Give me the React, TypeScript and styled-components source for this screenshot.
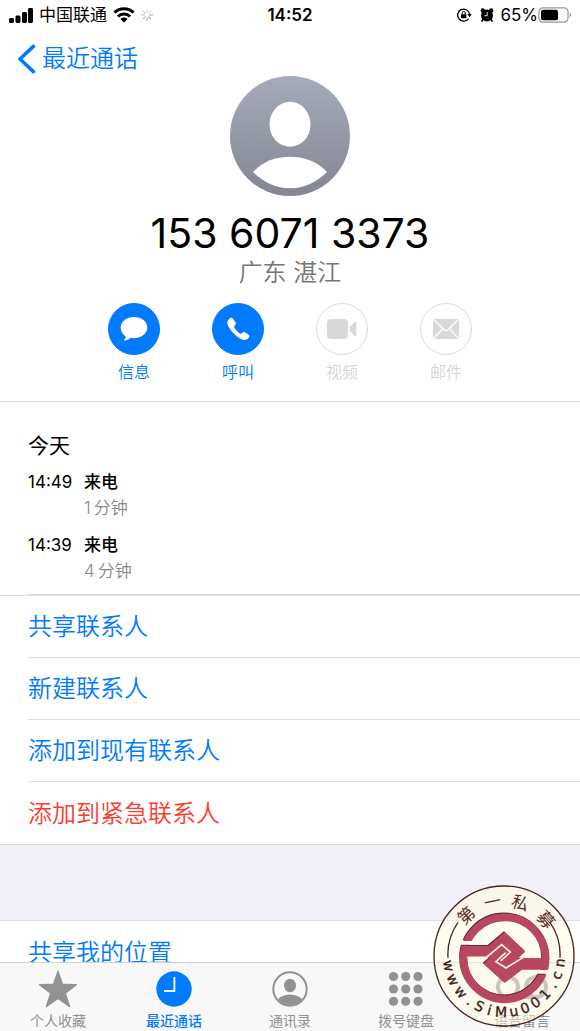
import React from "react";
import styled, { createGlobalStyle } from "styled-components";

const BLUE = "#007aff";
const GRAY = "#929292";
const LINE = "#dcdcdf";

const GlobalStyle = createGlobalStyle`
  *, *::before, *::after { box-sizing: border-box; }
  body {
    margin: 0;
    background: #fff;
    color: #000;
    font-family: Inter, "Noto Sans CJK SC", sans-serif;
  }
  button { font: inherit; color: inherit; background: none; border: 0; padding: 0; cursor: pointer; }
  h1, h2, p, ul { margin: 0; padding: 0; font-weight: 400; }
  ul { list-style: none; }
  svg { display: block; }
`;

const Screen = styled.div`
  position: relative;
  display: flex;
  flex-direction: column;
  height: 100vh;
  overflow: hidden;
`;

const StatusBar = styled.header`
  display: grid;
  grid-template-columns: 1fr auto 1fr;
  align-items: center;
  flex: none;
  height: 30px;
  padding: 0 8px;
  font-size: 17px;
  line-height: 30px;
`;

const StatusGroup = styled.div<{ $end?: boolean }>`
  display: flex;
  align-items: center;
  justify-content: ${(p) => (p.$end ? "flex-end" : "flex-start")};
  gap: ${(p) => (p.$end ? 0 : 6)}px;
`;

const StatusIcons = styled.span`
  display: flex;
  gap: 8px;
  margin-right: 6px;
`;

const Clock = styled.time`
  font-weight: 600;
`;

const NavBar = styled.nav`
  flex: none;
  height: 46px;
  padding: 8px 16px;
`;

const BackLink = styled.a`
  display: inline-flex;
  align-items: center;
  gap: 6px;
  height: 42px;
  color: ${BLUE};
  font-size: 24px;
  font-weight: 350;
  line-height: 44px;
  text-decoration: none;
`;

const Content = styled.main`
  flex: 1;
  min-height: 0;
  overflow: hidden;
`;

const Profile = styled.section`
  display: flex;
  flex-direction: column;
  align-items: center;
  padding-bottom: 17px;
  border-bottom: 1px solid ${LINE};
`;

const PhoneNumber = styled.h1`
  margin-top: 12px;
  font-size: 41px;
  line-height: 50px;
`;

const Region = styled.p`
  color: #757578;
  font-size: 24px;
  font-weight: 350;
  line-height: 30px;
`;

const Actions = styled.div`
  display: flex;
  gap: 52px;
  margin-top: 15px;
`;

const Action = styled.button`
  display: flex;
  flex-direction: column;
  align-items: center;
  gap: 5px;
  width: 52px;
  color: ${BLUE};
  font-size: 16px;
  font-weight: 350;
  line-height: 24px;
  &:disabled { color: #d4d4d6; cursor: default; }
`;

const ActionDisc = styled.span<{ $off?: boolean }>`
  display: grid;
  place-items: center;
  width: 52px;
  height: 52px;
  border: 1px solid ${(p) => (p.$off ? "#dcdcde" : BLUE)};
  border-radius: 50%;
  background: ${(p) => (p.$off ? "#fff" : BLUE)};
`;

const CallLog = styled.section`
  padding: 28px 0 0 28px;
`;

const Day = styled.h2`
  font-size: 21px;
  line-height: 32px;
`;

const Calls = styled.ul`
  display: grid;
  gap: 11px;
  margin-top: 7px;
  padding-bottom: 10px;
  border-bottom: 1px solid ${LINE};
`;

const Call = styled.li`
  display: grid;
  grid-template-columns: 56px 1fr;
  font-size: 17px;
  line-height: 26px;
`;

const CallKind = styled.span`
  font-weight: 500;
`;

const CallLength = styled.span`
  display: flex;
  gap: 3px;
  grid-column: 2;
  color: #88888c;
  font-weight: 350;
`;

const Rows = styled.ul`
  border-top: 1px solid ${LINE};
  border-bottom: 1px solid ${LINE};
`;

const Row = styled.li`
  padding-left: 28px;
`;

const RowButton = styled.button<{ $danger?: boolean }>`
  display: block;
  width: 100%;
  height: 62px;
  color: ${(p) => (p.$danger ? "#ff3b30" : BLUE)};
  font-size: 24px;
  font-weight: 350;
  line-height: 61px;
  text-align: left;
  ${Row}:not(:last-child) & { border-bottom: 1px solid ${LINE}; }
`;

const Spacer = styled.div`
  height: 75px;
  background: #f2f1f7;
`;

const TabBar = styled.nav`
  display: grid;
  grid-template-columns: repeat(5, 1fr);
  flex: none;
  height: 69px;
  border-top: 1px solid #d2d2d4;
  background: #f8f8f9;
`;

const Tab = styled.a<{ $active?: boolean }>`
  display: flex;
  flex-direction: column;
  align-items: center;
  padding-top: 7px;
  gap: 3px;
  color: ${(p) => (p.$active ? BLUE : GRAY)};
  font-size: 14px;
  font-weight: ${(p) => (p.$active ? 500 : 400)};
  line-height: 20px;
  text-decoration: none;
`;

const Seal = styled.svg`
  position: absolute;
  right: 5px;
  bottom: 4px;
  pointer-events: none;
`;

const Signal = () => (
  <svg width="25" height="16" viewBox="0 0 25 16" aria-label="信号">
    <rect x="1" y="11" width="5" height="5" rx="1.4" />
    <rect x="7.5" y="8.5" width="5" height="7.5" rx="1.4" />
    <rect x="14" y="5" width="5" height="11" rx="1.4" />
    <rect x="20" y="1" width="5" height="15" rx="1.4" />
  </svg>
);

const Wifi = () => (
  <svg width="22" height="16" viewBox="0 0 22 16" aria-label="Wi-Fi">
    <g fill="none" stroke="#000" strokeWidth="3">
      <path d="M1.4 5.6a13.7 13.7 0 0 1 19.2 0" />
      <path d="M4.9 9.5a8.7 8.7 0 0 1 12.2 0" />
    </g>
    <path d="M11 15.6 7.4 12a5.2 5.2 0 0 1 7.2 0z" />
  </svg>
);

const Spinner = () => (
  <svg width="12" height="12" viewBox="0 0 12 12">
    {[0, 45, 90, 135, 180, 225, 270, 315].map((a, i) => (
      <path
        key={a}
        d="M6 .5v3"
        stroke="#999"
        strokeWidth="1.1"
        strokeLinecap="round"
        opacity={0.95 - ((i + 6) % 8) * 0.09}
        transform={`rotate(${a} 6 6)`}
      />
    ))}
  </svg>
);

const RotationLock = () => (
  <svg width="15" height="14" viewBox="0 0 15 14">
    <path d="M11.6 10.6A6 6 0 1 1 12.6 6" fill="none" stroke="#000" strokeWidth="1.3" />
    <path d="M10.4 6h4.4l-2.2 3.2z" />
    <rect x="4" y="6.3" width="5.4" height="4" rx=".6" />
    <path d="M5.2 6.5V5a1.5 1.5 0 0 1 3 0v1.5" fill="none" stroke="#000" strokeWidth="1" />
  </svg>
);

const Alarm = () => (
  <svg width="14" height="14" viewBox="0 0 14 14">
    <circle cx="7" cy="7.4" r="6" />
    <circle cx="2.8" cy="2.5" r="2.2" />
    <circle cx="11.2" cy="2.5" r="2.2" />
    <path d="m3.2 11-1.6 2.6M10.8 11l1.6 2.6" stroke="#000" strokeWidth="1.7" />
    <path d="M7.2 4.2v3.5H4.5" fill="none" stroke="#fff" strokeWidth=".9" />
  </svg>
);

const Battery = () => (
  <svg width="34" height="16" viewBox="0 0 34 16">
    <rect x="1" y=".8" width="29" height="14.4" rx="4" fill="#fff" stroke="#999" strokeWidth="1.2" />
    <rect x="3" y="2.8" width="17" height="10.4" rx="2" />
    <path d="M31.6 5.6c2 .8 2 4 0 4.8z" fill="#999" />
  </svg>
);

const Chevron = () => (
  <svg width="20" height="30" viewBox="0 0 20 30">
    <path d="M17.4 2.4 4 15l13.4 12.6" fill="none" stroke={BLUE} strokeWidth="3.6" strokeLinecap="round" strokeLinejoin="round" />
  </svg>
);

const Avatar = () => (
  <svg width="120" height="120" viewBox="0 0 120 120" aria-label="头像">
    <defs>
      <linearGradient id="avatar" x2="0" y2="1">
        <stop stopColor="#a5abba" />
        <stop offset="1" stopColor="#848792" />
      </linearGradient>
    </defs>
    <circle cx="60" cy="60" r="60" fill="url(#avatar)" />
    <ellipse cx="60" cy="48.300" rx="20.500" ry="22.500" fill="#fff" />
    <path d="M23 96c9-10 22-15.300 37-15.300S88 86 97 96c-10 10-23 16.300-37 16.300S33 106 23 96z" fill="#fff" />
  </svg>
);

const Bubble = () => (
  <svg width="28" height="26" viewBox="0 0 28 26" fill="#fff">
    <path d="M14 1c7.500 0 13.300 4.600 13.300 10.600S21.500 22.200 14 22.200c-1.300 0-2.500-.1-3.600-.4-1.600 1.700-3.600 2.700-6 2.900-.6 0-.7-.5-.4-.9 1-.9 1.600-2 1.600-3.400C2.600 18.500.7 15.400.7 11.600.7 5.600 6.500 1 14 1z" />
  </svg>
);

const Handset = () => (
  <svg width="24" height="24" viewBox="0 0 24 24" fill="#fff">
    <path d="M2.800 2.300C4.200.9 5.600.3 6.700 1.400c1 1.100 2.500 3.200 3 4.200.6 1.200.1 2.100-.8 2.900-.9.700-1 1.300-.5 2.300 1 1.900 3.700 4.700 5.500 5.700 1 .6 1.600.4 2.300-.4.900-1.100 1.800-1.400 3-.7 1.200.6 2.800 1.700 3.700 2.600 1 1.100.5 2.300-.7 3.500-1.900 1.900-4.800 1.800-8.200-.1C10 19.200 4.900 14 2.600 9.800.8 6.500 1 4.100 2.800 2.300z" />
  </svg>
);

const Camera = () => (
  <svg width="30" height="20" viewBox="0 0 30 20" fill="#d9d9db">
    <rect x="0" y="0" width="21" height="20" rx="4" />
    <path d="M22.500 8.500 27.800 3c.6-.6 1.500-.3 1.500.6v12.800c0 .9-.9 1.200-1.500.6l-5.300-5.500z" />
  </svg>
);

const Envelope = () => (
  <svg width="26" height="20" viewBox="0 0 26 20">
    <rect width="26" height="20" rx="1" fill="#d9d9db" />
    <path d="m.5.500 10.700 10.300q1.800 1.600 3.600 0L25.500.5M.5 19.500l8.700-9.200M25.500 19.500l-8.700-9.200" fill="none" stroke="#fff" strokeWidth="1.400" />
  </svg>
);

const Star = () => (
  <svg width="40" height="38" viewBox="0 0 40 38" fill={GRAY}>
    <path d="M20 .5q.5 0 .8.900L25 13.700l13.500.3q1.300.3.300 1.300L28.100 23.500l4.100 12.700q.2 1.500-1.100.8L20 29.300 8.900 37q-1.300.7-1.100-.8l4.100-12.700L1.200 15.300q-1-1 .3-1.300l13.500-.3L19.200 1.400q.3-.9.800-.9z" />
  </svg>
);

const Recent = () => (
  <svg width="40" height="38" viewBox="0 0 40 38">
    <circle cx="20" cy="19" r="17.700" fill={BLUE} />
    <path d="M20.400 7v14H10" fill="none" stroke="#fff" strokeWidth="1.800" />
  </svg>
);

const Person = () => (
  <svg width="40" height="38" viewBox="0 0 40 38">
    <clipPath id="person"><circle cx="20" cy="19" r="16" /></clipPath>
    <circle cx="20" cy="19" r="16.700" fill="none" stroke={GRAY} strokeWidth="2" />
    <ellipse cx="20" cy="15.500" rx="6" ry="6.700" fill={GRAY} />
    <ellipse cx="20" cy="34" rx="14" ry="9.500" fill={GRAY} clipPath="url(#person)" />
  </svg>
);

const Keypad = () => (
  <svg width="40" height="38" viewBox="0 0 40 38" fill={GRAY}>
    {[6.5, 19, 31.300].map((y) => [7.5, 19.700, 32].map((x) => <circle key={`${x}-${y}`} cx={x} cy={y} r="4.600" />))}
  </svg>
);

const Voicemail = () => (
  <svg width="56" height="38" viewBox="0 0 56 38" fill="none" stroke={GRAY} strokeWidth="4">
    <circle cx="14" cy="17" r="10" />
    <circle cx="42" cy="17" r="10" />
    <path d="M14 27h28" />
  </svg>
);

const SEAL_TOP: [string, number][] = [["第", -43], ["一", -12], ["私", 17], ["募", 49]];
const SEAL_URL: [string, number][] = [
  ["w", 80], ["w", 65], ["w", 50], [".", 37], ["S", 26], ["i", 15], ["M", 3],
  ["u", -10], ["0", -22], ["0", -34], ["1", -47], [".", -59], ["c", -70], ["n", -83],
];

const SealMark = () => (
  <Seal width="142" height="142" viewBox="0 0 426 426">
    <circle cx="213" cy="213" r="210" fill="#fffce0" fillOpacity=".5" stroke="#4a2420" strokeWidth="4" />
    <path d="M75 112A168 168 0 0 0 45 218M351 112a168 168 0 0 1 30 106" fill="none" stroke="#4a2420" strokeWidth="4" />
    <g fill="#5a2a22" fontSize="51" textAnchor="middle" fontFamily='"Noto Sans CJK SC", sans-serif'>
      {SEAL_TOP.map(([ch, a]) => (
        <text key={ch} x="213" y="65" transform={`rotate(${a} 213 213)`}>{ch}</text>
      ))}
    </g>
    <g fill="#3a1a18" stroke="#3a1a18" strokeWidth="1" fontSize="42" textAnchor="middle" fontFamily='"DejaVu Sans", sans-serif'>
      {SEAL_URL.map(([ch, a], i) => (
        <text key={i} x="213" y="396" transform={`rotate(${a} 213 213)`}>{ch}</text>
      ))}
    </g>
    <defs>
      <mask id="gaps" maskUnits="userSpaceOnUse" x="0" y="0" width="292" height="292">
        <rect width="292" height="292" fill="#fff" />
        <path d="M0 95H80V109H0zM212 182H292V196H212z" fill="#000" />
      </mask>
      <g id="emblem">
        <circle cx="146" cy="147" r="123" fill="none" strokeWidth="23" />
        <path d="M22 110H97L146 69 208 127 184 148H270V181H198L146 221 82 163 103 145H22z" stroke="none" />
      </g>
    </defs>
    <g transform="translate(67 70)">
      <g mask="url(#gaps)">
        <use href="#emblem" fill="#6d2234" stroke="#6d2234" />
      </g>
      <g mask="url(#gaps)" transform="translate(2 3)">
        <use href="#emblem" fill="#b8475f" stroke="#b8475f" />
      </g>
      <path d="M36 147H93L139 109 165 131 136 158M257 147H204L152 179 122 160 151 133" fill="none" stroke="#fff6d8" strokeWidth="5" />
    </g>
  </Seal>
);

const ACTIONS = [
  { label: "信息", icon: <Bubble /> },
  { label: "呼叫", icon: <Handset /> },
  { label: "视频", icon: <Camera />, off: true },
  { label: "邮件", icon: <Envelope />, off: true },
];

const CALLS = [
  { time: "14:49", kind: "来电", minutes: 1 },
  { time: "14:39", kind: "来电", minutes: 4 },
];

const TABS = [
  { label: "个人收藏", icon: <Star /> },
  { label: "最近通话", icon: <Recent />, active: true },
  { label: "通讯录", icon: <Person /> },
  { label: "拨号键盘", icon: <Keypad /> },
  { label: "语音留言", icon: <Voicemail /> },
];

export default function App() {
  return (
    <Screen>
      <GlobalStyle />
      <StatusBar>
        <StatusGroup>
          <Signal />
          <span>中国联通</span>
          <Wifi />
          <Spinner />
        </StatusGroup>
        <Clock>14:52</Clock>
        <StatusGroup $end>
          <StatusIcons>
            <RotationLock />
            <Alarm />
          </StatusIcons>
          <span>65%</span>
          <Battery />
        </StatusGroup>
      </StatusBar>
      <NavBar>
        <BackLink href="#recents"><Chevron />最近通话</BackLink>
      </NavBar>
      <Content>
        <Profile>
          <Avatar />
          <PhoneNumber>153 6071 3373</PhoneNumber>
          <Region>广东 湛江</Region>
          <Actions>
            {ACTIONS.map((a) => (
              <Action key={a.label} disabled={a.off}>
                <ActionDisc $off={a.off}>{a.icon}</ActionDisc>
                {a.label}
              </Action>
            ))}
          </Actions>
        </Profile>
        <CallLog>
          <Day>今天</Day>
          <Calls>
            {CALLS.map((c) => (
              <Call key={c.time}>
                <time>{c.time}</time>
                <CallKind>{c.kind}</CallKind>
                <CallLength>
                  <span>{c.minutes}</span>
                  <span>分钟</span>
                </CallLength>
              </Call>
            ))}
          </Calls>
        </CallLog>
        <Rows>
          <Row><RowButton>共享联系人</RowButton></Row>
          <Row><RowButton>新建联系人</RowButton></Row>
          <Row><RowButton>添加到现有联系人</RowButton></Row>
          <Row><RowButton $danger>添加到紧急联系人</RowButton></Row>
        </Rows>
        <Spacer />
        <Rows>
          <Row><RowButton>共享我的位置</RowButton></Row>
        </Rows>
      </Content>
      <TabBar>
        {TABS.map((t) => (
          <Tab key={t.label} href="#" $active={t.active}>
            {t.icon}
            {t.label}
          </Tab>
        ))}
      </TabBar>
      <SealMark />
    </Screen>
  );
}
